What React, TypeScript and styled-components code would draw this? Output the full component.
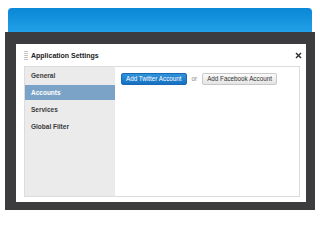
import React, { useState } from "react";
import styled, { createGlobalStyle } from "styled-components";

const GlobalStyle = createGlobalStyle`
  body {
    margin: 0;
    background: #fff;
    font-family: "Liberation Sans", Arial, sans-serif;
  }
`;

const Page = styled.div`
  width: 320px;
  height: 240px;
  padding-top: 8px;
  box-sizing: border-box;
`;

const TopBar = styled.div`
  margin: 0 8px;
  height: 24px;
  border-radius: 4px 4px 0 0;
  background: linear-gradient(#0a87d6, #22a0e6);
`;

const Backdrop = styled.div`
  margin: 0 5px;
  height: 178px;
  box-sizing: border-box;
  padding: 12px 9px 8px 11px;
  background: #3c3c3e;
`;

const Dialog = styled.div`
  height: 158px;
  box-sizing: border-box;
  padding: 0 6px 5px 8px;
  background: #fff;
  display: flex;
  flex-direction: column;
`;

const TitleRow = styled.div`
  height: 22px;
  display: flex;
  align-items: center;
  gap: 3px;
`;

const Title = styled.h1`
  margin: 0;
  flex: 1;
  font-size: 7px;
  font-weight: 700;
  color: #222;
`;

const Close = styled.button`
  border: 0;
  background: none;
  padding: 0;
  width: 8px;
  height: 8px;
  margin-right: -2px;
  display: flex;
  align-items: center;
  justify-content: center;
  cursor: pointer;
`;

const Body = styled.div`
  flex: 1;
  border: 1px solid #dcdcdc;
  display: flex;
`;

const Sidebar = styled.ul`
  width: 90px;
  margin: 0;
  padding: 1px 0 0;
  list-style: none;
  background: #ebebeb;
`;

const NavItem = styled.li<{ $active?: boolean }>`
  height: 15px;
  margin-bottom: 2px;
  padding-left: 6px;
  display: flex;
  align-items: center;
  font-size: 6.5px;
  font-weight: 700;
  color: ${(p) => (p.$active ? "#fff" : "#3a3a3a")};
  background: ${(p) => (p.$active ? "#7ba3c7" : "transparent")};
  cursor: pointer;
`;

const Content = styled.div`
  flex: 1;
  padding: 6px 6px;
  display: flex;
  align-items: flex-start;
  gap: 4px;
`;

const Button = styled.button<{ $primary?: boolean }>`
  height: 12px;
  padding: 0 4px;
  border-radius: 2px;
  font-family: "Liberation Sans", Arial, sans-serif;
  font-size: 6.3px;
  line-height: 10px;
  cursor: pointer;
  border: 1px solid ${(p) => (p.$primary ? "#1a67b2" : "#c8c8c8")};
  color: ${(p) => (p.$primary ? "#fff" : "#333")};
  background: ${(p) =>
    p.$primary
      ? "linear-gradient(#2f93dc, #1770c2)"
      : "linear-gradient(#fbfbfb, #e4e4e4)"};
`;

const Or = styled.span`
  font-size: 6.3px;
  color: #888;
  line-height: 12px;
  margin: 0 1px;
`;

const Grip = () => (
  <svg width="4" height="9" viewBox="0 0 4 9">
    {[0.5, 2.5, 4.5, 6.5, 8.5].map((y) => (
      <line key={y} x1="0" x2="4" y1={y} y2={y} stroke="#c4c4c4" strokeWidth="1" />
    ))}
  </svg>
);

const CloseIcon = () => (
  <svg width="7" height="7" viewBox="0 0 7 7">
    <path d="M1 1L6 6M6 1L1 6" stroke="#333" strokeWidth="1.5" />
  </svg>
);

const sections = ["General", "Accounts", "Services", "Global Filter"];

export default function App() {
  const [active, setActive] = useState("Accounts");

  return (
    <Page>
      <GlobalStyle />
      <TopBar />
      <Backdrop>
        <Dialog>
          <TitleRow>
            <Grip />
            <Title>Application Settings</Title>
            <Close aria-label="Close">
              <CloseIcon />
            </Close>
          </TitleRow>
          <Body>
            <Sidebar>
              {sections.map((s) => (
                <NavItem key={s} $active={s === active} onClick={() => setActive(s)}>
                  {s}
                </NavItem>
              ))}
            </Sidebar>
            <Content>
              <Button $primary>Add Twitter Account</Button>
              <Or>or</Or>
              <Button>Add Facebook Account</Button>
            </Content>
          </Body>
        </Dialog>
      </Backdrop>
    </Page>
  );
}
